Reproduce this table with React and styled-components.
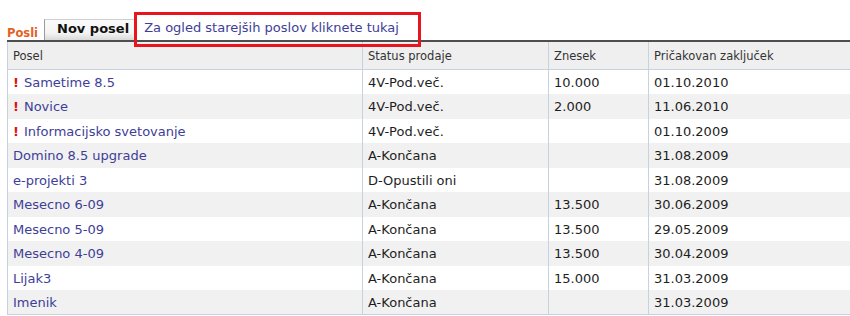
import React from 'react';
import styled, { createGlobalStyle } from 'styled-components';

const GlobalStyle = createGlobalStyle`
  body {
    margin: 0;
    background: #fff;
    font-family: "DejaVu Sans", Verdana, sans-serif;
  }
`;

const Page = styled.div`
  width: 850px;
  height: 316px;
  overflow: hidden;
  background: #fff;
`;

const TopBar = styled.div`
  position: relative;
  display: flex;
  align-items: flex-end;
  height: 40px;
  padding-left: 7px;
`;

const Title = styled.span`
  font-size: 11.5px;
  font-weight: bold;
  color: #e2621f;
  line-height: 14px;
  margin-bottom: 0;
  margin-right: 6px;
`;

const Tab = styled.div`
  display: flex;
  align-items: center;
  height: 21px;
  padding: 0 6px 3px 12px;
  box-sizing: border-box;
  font-size: 13px;
  font-weight: bold;
  color: #111;
  background: linear-gradient(#fafafa, #f4f4f4 65%, #d9d9d9);
  border-top: 1px solid #d0d0d0;
  border-left: 1px solid #9a9a9a;
  border-right: 1px solid #b8b8b8;
`;

const OldLink = styled.a`
  font-size: 13px;
  line-height: 16px;
  color: #3e3e98;
  text-decoration: none;
  margin-left: 8px;
  margin-bottom: 4px;
  cursor: pointer;
`;

const Highlight = styled.div`
  position: absolute;
  left: 134px;
  top: 12px;
  width: 281px;
  height: 29px;
  border: 3px solid #e8141e;
  pointer-events: none;
  z-index: 2;
`;

const Table = styled.table`
  margin-left: 7px;
  width: 842px;
  table-layout: fixed;
  border-collapse: collapse;
  border-top: 2px solid #4e4e4e;
  border-bottom: 1px solid #c6d3df;
`;

const HeadCell = styled.th`
  height: 26px;
  padding: 1px 0 0 5px;
  text-align: left;
  font-size: 11.5px;
  font-weight: normal;
  color: #333;
  background: #efefef;
  border-top: 1px solid #fbfbfb;
  border-left: 1px solid #c6d3df;
  border-bottom: 1px solid #c6d3df;
  white-space: nowrap;
`;

const Row = styled.tr`
  height: 24.5px;
  background: ${(p) => (p.$shaded ? '#f1f1f1' : '#fff')};
`;

const Cell = styled.td`
  padding: 1px 0 0 5px;
  font-size: 13px;
  color: #1e1e1e;
  border-left: 1px solid #c6d3df;
  white-space: nowrap;
`;

const Mark = styled.span`
  color: #e01010;
  font-weight: bold;
  margin-right: 5px;
`;

const DealLink = styled.a`
  color: #3e3e98;
  text-decoration: none;
  cursor: pointer;
`;

const deals = [
  { name: 'Sametime 8.5', urgent: true, status: '4V-Pod.več.', amount: '10.000', date: '01.10.2010' },
  { name: 'Novice', urgent: true, status: '4V-Pod.več.', amount: '2.000', date: '11.06.2010' },
  { name: 'Informacijsko svetovanje', urgent: true, status: '4V-Pod.več.', amount: '', date: '01.10.2009' },
  { name: 'Domino 8.5 upgrade', status: 'A-Končana', amount: '', date: '31.08.2009' },
  { name: 'e-projekti 3', status: 'D-Opustili oni', amount: '', date: '31.08.2009' },
  { name: 'Mesecno 6-09', status: 'A-Končana', amount: '13.500', date: '30.06.2009' },
  { name: 'Mesecno 5-09', status: 'A-Končana', amount: '13.500', date: '29.05.2009' },
  { name: 'Mesecno 4-09', status: 'A-Končana', amount: '13.500', date: '30.04.2009' },
  { name: 'Lijak3', status: 'A-Končana', amount: '15.000', date: '31.03.2009' },
  { name: 'Imenik', status: 'A-Končana', amount: '', date: '31.03.2009' },
];

const App = () => {
  return (
    <Page>
      <GlobalStyle />
      <TopBar>
        <Title>Posli</Title>
        <Tab>Nov posel</Tab>
        <OldLink>Za ogled starejših poslov kliknete tukaj</OldLink>
        <Highlight />
      </TopBar>
      <Table>
        <colgroup>
          <col style={{ width: 355 }} />
          <col style={{ width: 186 }} />
          <col style={{ width: 100 }} />
          <col style={{ width: 201 }} />
        </colgroup>
        <thead>
          <tr>
            <HeadCell>Posel</HeadCell>
            <HeadCell>Status prodaje</HeadCell>
            <HeadCell>Znesek</HeadCell>
            <HeadCell>Pričakovan zaključek</HeadCell>
          </tr>
        </thead>
        <tbody>
          {deals.map((d, i) => (
            <Row key={d.name} $shaded={i % 2 === 1}>
              <Cell>
                {d.urgent && <Mark>!</Mark>}
                <DealLink>{d.name}</DealLink>
              </Cell>
              <Cell>{d.status}</Cell>
              <Cell>{d.amount}</Cell>
              <Cell>{d.date}</Cell>
            </Row>
          ))}
        </tbody>
      </Table>
    </Page>
  );
};

export default App;
